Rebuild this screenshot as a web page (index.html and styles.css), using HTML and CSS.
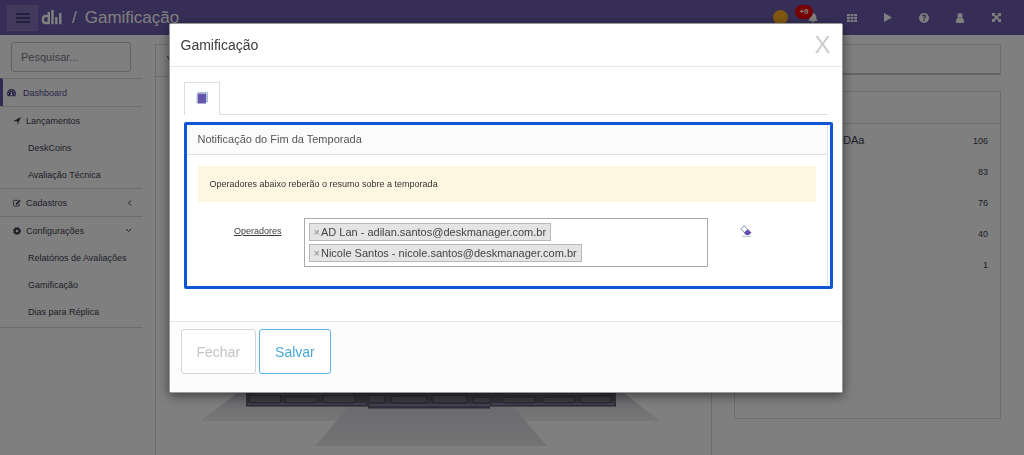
FILE: index.html
```html
<!DOCTYPE html>
<html lang="pt-BR">
<head>
<meta charset="utf-8">
<meta name="viewport" content="width=device-width, initial-scale=1">
<title>Gamificação</title>
<link rel="stylesheet" href="styles.css">
</head>
<body>
<div class="app">
  <header class="topbar">
    <button class="menu-toggle" type="button" aria-label="Menu">
      <svg width="14" height="12" viewBox="0 0 14 12" fill="currentColor"><path d="M0 1h14v2H0zM0 5h14v2H0zM0 9h14v2H0z"/></svg>
    </button>
    <svg class="logo" width="21" height="16" viewBox="0 0 21 16" fill="none" stroke="currentColor" stroke-width="2.4"><path d="M8 6H4.500C1 6 1 13 4.500 13H8M7.800 2v12.200M11.500 0v14.200M15.300 7v7.200M19.300 3v11.200"/></svg>
    <span class="brand-sep">/</span>
    <h1 class="page-title">Gamificação</h1>
    <nav class="actions" aria-label="Ações">
      <a class="action" href="#" aria-label="Moedas"><span class="coin"></span></a>
      <a class="action" href="#" aria-label="Notificações">
        <svg class="bell" width="10" height="10" viewBox="0 0 12 12" fill="currentColor"><path d="M6 0c.6 0 1 .4 1 1 2 .5 3 2 3 4 0 2.500.5 3.500 2 4.500H0C1.500 8.500 2 7.500 2 5c0-2 1-3.500 3-4 0-.6.4-1 1-1zM4.500 10h3c0 1-.6 1.700-1.500 1.700S4.500 11 4.500 10z"/></svg>
        <span class="badge">+9</span>
      </a>
      <a class="action" href="#" aria-label="Aplicativos">
        <svg width="10" height="8" viewBox="0 0 10 8" fill="currentColor"><path d="M0 0h2.800v2.200H0zM3.600 0h2.800v2.200H3.600zM7.200 0H10v2.200H7.200zM0 2.900h2.800v2.200H0zM3.600 2.900h2.800v2.200H3.600zM7.200 2.900H10v2.200H7.200zM0 5.800h2.800V8H0zM3.600 5.800h2.800V8H3.600zM7.200 5.800H10V8H7.200z"/></svg>
      </a>
      <a class="action" href="#" aria-label="Iniciar">
        <svg width="8" height="9" viewBox="0 0 8 9" fill="currentColor"><path d="M0 0l8 4.500L0 9z"/></svg>
      </a>
      <a class="action" href="#" aria-label="Ajuda">
        <svg width="10" height="10" viewBox="0 0 10 10" fill="currentColor"><path fill-rule="evenodd" d="M5 0a5 5 0 110 10A5 5 0 015 0zM3 3.500h1.300c0-.5.300-.7.700-.7s.7.200.7.600c0 .8-1.400.8-1.400 2.300h1.400c0-1 1.500-1 1.500-2.500C7.200 2.200 6.300 1.600 5 1.600S3 2.300 3 3.500zM4.300 6.500v1.400h1.400V6.500z"/></svg>
      </a>
      <a class="action" href="#" aria-label="Usuário">
        <svg width="8" height="10" viewBox="0 0 8 10" fill="currentColor"><circle cx="4" cy="2.700" r="2.600"/><path d="M2 4.800c1.200 1.100 2.800 1.100 4 0 1.400.5 2 2 2 3.700C8 9.400 7.500 10 6.700 10H1.300C.5 10 0 9.400 0 8.500c0-1.700.6-3.200 2-3.700z"/></svg>
      </a>
      <a class="action" href="#" aria-label="Tela cheia">
        <svg width="9" height="9" viewBox="0 0 10 10" fill="currentColor"><path d="M0 0h3.800L2.700 1.200 5 3.500l2.300-2.300L6.200 0H10v3.800L8.800 2.700 6.500 5l2.300 2.300L10 6.200V10H6.200l1.100-1.200L5 6.500 2.700 8.800 3.800 10H0V6.200l1.200 1.100L3.500 5 1.200 2.700 0 3.800z"/></svg>
      </a>
    </nav>
  </header>

  <div class="workspace">
    <aside class="sidebar">
      <div class="search"><input class="search-input" type="text" placeholder="Pesquisar..." aria-label="Pesquisar"></div>
      <nav aria-label="Principal">
        <div class="nav-group nav-current">
          <a class="nav-item nav-dashboard" href="#">
            <svg width="9" height="8" viewBox="0 0 9 8" fill="currentColor"><path fill-rule="evenodd" d="M4.500 0A4.500 4.500 0 019 4.500c0 1-.3 2-.8 2.800H.8C.3 6.500 0 5.500 0 4.500A4.500 4.500 0 014.500 0zM4 1v1h1V1zM1.700 2v1h1V2zM6.300 2v1h1V2zM.8 4.200v1h1v-1zM7.200 4.200v1h1v-1zM4.200 3L3.800 5c-.6.300-.5 1.500.7 1.500s1.300-1.200.6-1.500l-.2-2z"/></svg>
            <span>Dashboard</span>
          </a>
        </div>
        <div class="nav-group">
          <a class="nav-item" href="#">
            <svg width="8" height="8" viewBox="0 0 8 8" fill="currentColor"><path d="M8 0L4.500 8V4.200H0z"/></svg>
            <span>Lançamentos</span>
          </a>
          <a class="nav-item nav-sub" href="#">DeskCoins</a>
          <a class="nav-item nav-sub" href="#">Avaliação Técnica</a>
        </div>
        <div class="nav-group">
          <a class="nav-item" href="#">
            <svg width="8" height="8" viewBox="0 0 9 8" fill="none" stroke="currentColor"><path d="M5.500 1H1.500a1 1 0 00-1 1v4.500a1 1 0 001 1H6a1 1 0 001-1V5"/><path d="M3.500 5.500L8 1" stroke-width="1.800"/></svg>
            <span>Cadastros</span>
            <svg class="chevron" width="5" height="6" viewBox="0 0 5 6" fill="none" stroke="currentColor"><path d="M4 .5L1.500 3 4 5.500"/></svg>
          </a>
        </div>
        <div class="nav-group nav-last">
          <a class="nav-item" href="#">
            <svg width="8" height="8" viewBox="0 0 8 8" fill="none" stroke="currentColor"><circle cx="4" cy="4" r="2.300" stroke-width="2"/><circle cx="4" cy="4" r="3.500" stroke-dasharray="1.600 1.150"/></svg>
            <span>Configurações</span>
            <svg class="chevron" width="7" height="5" viewBox="0 0 7 5" fill="none" stroke="currentColor"><path d="M1 1l2.500 2.500L6 1"/></svg>
          </a>
          <a class="nav-item nav-sub" href="#">Relatórios de Avaliações</a>
          <a class="nav-item nav-sub" href="#">Gamificação</a>
          <a class="nav-item nav-sub" href="#">Dias para Réplica</a>
        </div>
      </nav>
    </aside>

    <main class="content">
      <section class="card podium-card">
        <div class="card-head">V</div>
        <svg class="podium" viewBox="156 386 555 60" aria-hidden="true">
          <defs>
            <linearGradient id="shade" x1="0" y1="0" x2="0" y2="1"><stop offset="0" stop-color="#ccc8d6"/><stop offset="1" stop-color="#eeeeee"/></linearGradient>
            <linearGradient id="shadeFront" x1="0" y1="0" x2="0" y2="1"><stop offset="0" stop-color="#d0cbda"/><stop offset="1" stop-color="#e7e7e7"/></linearGradient>
          </defs>
          <path d="M246 386l-45 35h459l-45-35z" fill="url(#shade)"/>
          <path d="M367 386l-52 60h232l-52-60z" fill="url(#shadeFront)"/>
          <path d="M246 386h370v20H490v2H368v-2H246z" fill="#666473"/>
          <path d="M248 404h118M370 405h120M492 404h122" stroke="#8580a2" stroke-width="2"/>
          <path d="M246 406h122M368 408h122M490 406h126" stroke="#504d62"/>
          <g fill="#777582" stroke="#4d4b59">
            <rect x="249" y="395" width="32" height="8" rx="3"/><rect x="285" y="397" width="33" height="6" rx="3"/><rect x="323" y="395" width="32" height="8" rx="3"/>
            <rect x="368" y="395" width="17" height="8" rx="3"/><rect x="391" y="396" width="36" height="7" rx="3"/><rect x="432" y="395" width="35" height="8" rx="3"/><rect x="473" y="397" width="18" height="6" rx="3"/>
            <rect x="502" y="397" width="34" height="6" rx="3"/><rect x="542" y="397" width="33" height="6" rx="3"/><rect x="580" y="396" width="31" height="7" rx="3"/>
          </g>
          <path d="M253 394h100M504 394h98" stroke="#888592" stroke-width="1"/>
        </svg>
      </section>
      <div class="side-column">
        <section class="card filter-card"></section>
        <section class="card ranking-card">
          <div class="card-head"></div>
          <table class="ranking">
            <tbody>
              <tr><th scope="row">DAa</th><td>106</td></tr>
              <tr><th scope="row"></th><td>83</td></tr>
              <tr><th scope="row"></th><td>76</td></tr>
              <tr><th scope="row"></th><td>40</td></tr>
              <tr><th scope="row"></th><td>1</td></tr>
            </tbody>
          </table>
        </section>
      </div>
    </main>
  </div>
</div>

<div class="backdrop">
  <div class="modal" role="dialog" aria-modal="true" aria-labelledby="modal-title">
    <div class="modal-head">
      <h2 class="modal-title" id="modal-title">Gamificação</h2>
      <button class="close" type="button">X</button>
    </div>
    <div class="modal-body">
      <div class="tabs" role="tablist">
        <button class="tab" type="button" role="tab" aria-selected="true" aria-label="Notificação">
          <svg width="12" height="12" viewBox="0 0 12 12"><path d="M2 .5h9.500V10" fill="none" stroke="#7e9fc4" stroke-dasharray="1.500 .7"/><path d="M1.500 1.500H10V11.500H1.500z" fill="#6556ad"/><path d="M1 1v10.500M2 1h8.500v9.500" fill="none" stroke="#a9b9d5" stroke-width=".8"/></svg>
        </button>
      </div>
      <section class="panel">
        <div class="panel-inner">
          <h3 class="panel-title">Notificação do Fim da Temporada</h3>
          <div class="panel-body">
            <p class="notice">Operadores abaixo reberão o resumo sobre a temporada</p>
            <div class="field">
              <span class="field-label" id="operators-label">Operadores</span>
              <ul class="tag-box" aria-labelledby="operators-label">
                <li class="tag"><button class="tag-remove" type="button" aria-label="Remover AD Lan">×</button>AD Lan - adilan.santos@deskmanager.com.br</li>
                <li class="tag"><button class="tag-remove" type="button" aria-label="Remover Nicole Santos">×</button>Nicole Santos - nicole.santos@deskmanager.com.br</li>
              </ul>
              <button class="erase" type="button" aria-label="Limpar">
                <svg width="12" height="12" viewBox="0 0 12 12"><path d="M4 .8l3.800 3.700-3.300 3.300L.8 4z" fill="#fff" stroke="#7893b8" stroke-linejoin="round"/><path d="M7.800 4.300l3.700 3.200L9 10H6L4 8z" fill="#6450a8"/><path d="M2 11.300h9" stroke="#a9bdd8"/></svg>
              </button>
            </div>
          </div>
        </div>
      </section>
    </div>
    <div class="modal-foot">
      <button class="btn btn-muted" type="button">Fechar</button>
      <button class="btn btn-primary" type="button">Salvar</button>
    </div>
  </div>
</div>
</body>
</html>
```

FILE: styles.css
```css
* { box-sizing: border-box; }

body {
  margin: 0;
  font-family: "Liberation Sans", Arial, sans-serif;
  font-size: 9px;
  color: #3c3c50;
  background: #fff;
}

button, input { font-family: inherit; }
a { color: inherit; text-decoration: none; }
svg { display: block; flex: none; }
h1, h2, h3, p, ul { margin: 0; padding: 0; font-weight: normal; }

.app {
  display: flex;
  flex-direction: column;
  height: 100vh;
  overflow: hidden;
}

/* Top bar */
.topbar {
  display: flex;
  align-items: center;
  flex: none;
  min-height: 35px;
  padding: 0 10px 0 7px;
  background: #6c5cae;
  color: #fff;
}
.menu-toggle {
  display: grid;
  place-items: center;
  width: 31px;
  height: 26px;
  padding: 0;
  border: 1px solid #8577bd;
  background: #8274b8;
  color: #4a4378;
}
.logo { margin-left: 3px; }
.brand-sep { margin-left: 10px; font-size: 17px; }
.page-title { margin-left: 8px; font-size: 17px; }
.actions { display: flex; margin-left: auto; }
.action {
  position: relative;
  display: grid;
  place-items: center;
  width: 36px;
  height: 34px;
}
.coin {
  width: 15px;
  height: 15px;
  border-radius: 50%;
  background: #ffad1f;
}
.bell { margin-right: 6px; }
.badge {
  position: absolute;
  top: 4px;
  left: -3px;
  width: 18px;
  border-radius: 7px;
  background: #f00000;
  font-size: 8px;
  font-weight: bold;
  line-height: 14px;
  text-align: center;
}

.workspace { display: flex; flex: 1; min-height: 0; }

/* Sidebar */
.sidebar { flex: none; width: 142px; }
.search { padding: 7px 11px 6px; }
.search-input {
  width: 100%;
  height: 30px;
  padding: 0 9px;
  border: 1px solid #c4c4cc;
  border-radius: 3px;
  background: #fff;
  font-size: 11px;
}
.search-input::placeholder { color: #77778a; opacity: 1; }
.nav-group { border-top: 1px solid #dadada; }
.nav-current { border-left: 3px solid #6455a8; }
.nav-last { padding-bottom: 2px; border-bottom: 1px solid #dadada; }
.nav-item {
  display: flex;
  align-items: center;
  gap: 5px;
  height: 27px;
  padding: 0 10px 0 13px;
}
.nav-dashboard { gap: 7px; padding-left: 4px; color: #544a94; }
.nav-sub { padding-left: 28px; }
.chevron { margin-left: auto; }

/* Content cards */
.content {
  display: grid;
  grid-template-columns: 557fr 267fr;
  gap: 22px;
  flex: 1;
  min-width: 0;
  padding: 9px 23px 0 13px;
}
.card { border: 1px solid #d8d8dc; background: #fff; }
.card-head {
  min-height: 32px;
  padding: 0 11px;
  border-bottom: 1px solid #d8d8dc;
  line-height: 29px;
}
.podium-card { display: flex; flex-direction: column; border-bottom: 0; }
.podium { width: 100%; margin-top: auto; margin-bottom: 9px; }
.side-column { display: flex; flex-direction: column; gap: 16px; padding-bottom: 36px; }
.filter-card { height: 31px; border-bottom: 2px solid #c8c8ce; }
.ranking-card { flex: 1; }
.ranking { width: 100%; border-collapse: collapse; }
.ranking tr { height: 31px; }
.ranking th { padding: 0 0 0 108px; font-size: 11px; font-weight: normal; text-align: left; }
.ranking td { padding: 2px 12px 0 0; text-align: right; }

/* Modal */
.backdrop {
  position: fixed;
  inset: 0;
  display: flex;
  align-items: flex-start;
  justify-content: center;
  padding: 23px 13px 23px 0;
  background: rgba(0, 0, 0, 0.5);
  overflow: auto;
}
.modal {
  width: 100%;
  max-width: 674px;
  border: 1px solid #999;
  border-radius: 2px;
  background: #fff;
  box-shadow: 0 3px 11px rgba(0, 0, 0, 0.5);
}
.modal-head {
  display: flex;
  align-items: center;
  justify-content: space-between;
  height: 43px;
  padding: 0 11px;
  border-bottom: 1px solid #e8e8e8;
}
.modal-title { font-size: 14px; color: #3c3c3c; }
.close {
  padding: 0;
  border: 0;
  background: none;
  font-size: 24px;
  line-height: 24px;
  color: #c8cccd;
}
.modal-body { padding: 15px 9px 32px 14px; }
.tabs { display: flex; margin-right: 5px; border-bottom: 1px solid #ddd; }
.tab {
  display: grid;
  place-items: center;
  width: 36px;
  height: 33px;
  margin-bottom: -1px;
  padding: 0 0 2px;
  border: 1px solid #ddd;
  border-bottom-color: #fff;
  background: #fff;
}
.panel {
  margin-top: 7px;
  padding-right: 2px;
  border: 3px solid #0f57d2;
  border-radius: 2px;
}
.panel-inner { border-right: 1px solid #e4e4e4; }
.panel-title {
  padding: 0 11px;
  border-bottom: 1px solid #ddd;
  background: #fbfbfb;
  font-size: 11px;
  line-height: 29px;
  color: #555;
}
.panel-body { padding: 11px 11px 19px; }
.notice {
  padding: 0 12px;
  background: #fdf6e1;
  line-height: 36px;
  color: #333;
}
.field {
  display: grid;
  grid-template-columns: 84px minmax(0, 404fr) 86fr;
  column-gap: 22px;
  margin-top: 16px;
}
.field-label {
  padding-top: 8px;
  text-align: right;
  text-decoration: underline;
  color: #3c3c3c;
}
.tag-box {
  display: flex;
  flex-direction: column;
  align-items: flex-start;
  gap: 3px;
  padding: 4px;
  border: 1px solid #aaa;
  list-style: none;
}
.tag {
  padding: 0 4px;
  border: 1px solid #b8b8b8;
  background: #e4e4e4;
  font-size: 11px;
  line-height: 16px;
  color: #444;
}
.tag-remove {
  margin-right: 1px;
  padding: 0;
  border: 0;
  background: none;
  font-size: 11px;
  line-height: 16px;
  color: #888;
}
.erase {
  justify-self: start;
  align-self: start;
  margin: 7px 0 0 10px;
  padding: 0;
  border: 0;
  background: none;
}
.modal-foot {
  display: flex;
  gap: 3px;
  padding: 7px 11px 18px;
  border-top: 1px solid #e4e4e4;
  background: #fcfcfc;
}
.btn {
  height: 45px;
  padding: 0 15px;
  border: 1px solid;
  border-radius: 3px;
  background: #fff;
  font-size: 14px;
}
.btn-muted { border-color: #d4d4d4; color: #c4c4c8; }
.btn-primary { border-color: #5cb3dc; color: #4ba8d8; }
```
